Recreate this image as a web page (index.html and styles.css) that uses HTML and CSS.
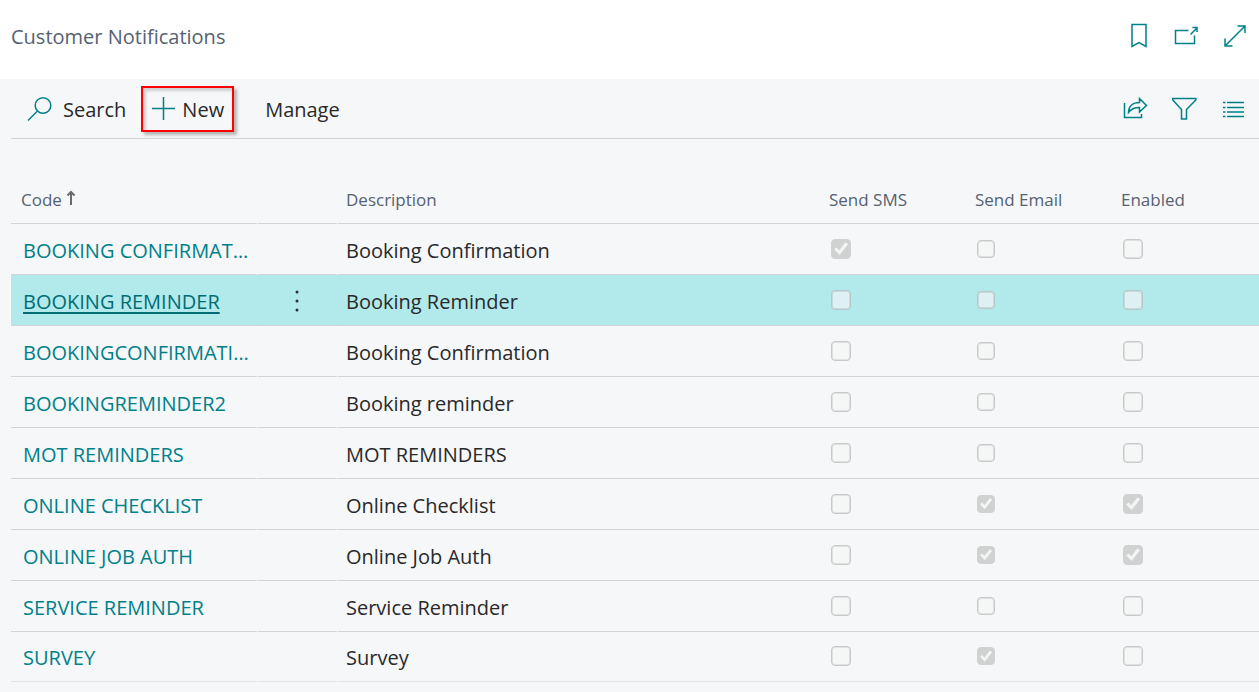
FILE: index.html
```html
<!DOCTYPE html>
<html lang="en">
<head>
<meta charset="utf-8">
<meta name="viewport" content="width=device-width, initial-scale=1">
<title>Customer Notifications</title>
<link rel="stylesheet" href="styles.css">
</head>
<body>
<header class="page-header">
  <h1 class="page-title">Customer Notifications</h1>
  <div class="header-actions">
    <button class="icon-button" type="button" aria-label="Bookmark">
      <svg width="24" height="26" viewBox="0 0 24 26"><path d="M5 2.500H19V24.500L12 20.500L5 24.500Z"/></svg>
    </button>
    <button class="icon-button" type="button" aria-label="Open in new window">
      <svg width="26" height="26" viewBox="0 0 26 26"><path d="M14.500 8.500H1.500V21.500H20.500V13.500M16.500 12.500L23 6M18.500 5.500H23V10"/></svg>
    </button>
    <button class="icon-button" type="button" aria-label="Expand">
      <svg width="24" height="26" viewBox="0 0 24 26"><path d="M2 24L22 4M14.500 4H22V11M2 16.500V24H9.500"/></svg>
    </button>
  </div>
</header>
<main class="content">
  <div class="toolbar">
    <button class="command search" type="button">
      <svg width="26" height="26" viewBox="0 0 26 26"><circle cx="17" cy="9.500" r="7.800"/><path d="M11.500 15L2 24.500"/></svg>
      <span>Search</span>
    </button>
    <button class="command new" type="button">
      <svg width="24" height="24" viewBox="0 0 24 24"><path d="M1 11.500H24M12.500 0V23"/></svg>
      <span>New</span>
    </button>
    <button class="command manage" type="button"><span>Manage</span></button>
    <div class="toolbar-icons">
      <button class="icon-button" type="button" aria-label="Share">
        <svg width="26" height="26" viewBox="0 0 26 26"><path d="M1.500 7V21.500H18.500V18M5.500 16.500C5.500 10 10 6.500 16.500 6.500V2.500L23.500 9.500L16.500 16V11.500C11.500 11.500 8 13 5.500 16.500Z"/></svg>
      </button>
      <button class="icon-button" type="button" aria-label="Filter">
        <svg width="26" height="26" viewBox="0 0 26 26"><path d="M.8 2.500H23.800V4L14.500 13.500V23H9.500V13.500L.8 4Z"/></svg>
      </button>
      <button class="icon-button" type="button" aria-label="Show as list">
        <svg width="24" height="26" viewBox="0 0 24 26"><path d="M2 6.500H4.500M6 6.500H23M2 11.500H4.500M6 11.500H23M2 16H4.500M6 16H23M2 20.500H4.500M6 20.500H23"/></svg>
      </button>
    </div>
  </div>
  <table class="list">
    <colgroup>
      <col class="col-code"><col class="col-menu"><col class="col-description"><col class="col-flag"><col class="col-flag"><col class="col-flag">
    </colgroup>
    <thead>
      <tr>
        <th class="code split" scope="col" aria-sort="ascending">Code <svg class="sort" width="10" height="16" viewBox="0 0 10 16"><path d="M5 15V2M1.500 5.500L5 2L8.500 5.500"/></svg></th>
        <td class="split"></td>
        <th scope="col">Description</th>
        <th scope="col">Send SMS</th>
        <th scope="col">Send Email</th>
        <th scope="col">Enabled</th>
      </tr>
    </thead>
    <tbody>
      <tr>
        <td class="code split"><a href="#">BOOKING CONFIRMAT…</a></td><td class="split"></td><td>Booking Confirmation</td>
        <td class="flag"><input type="checkbox" aria-label="Send SMS" checked disabled></td>
        <td class="flag email"><input type="checkbox" aria-label="Send Email" disabled></td>
        <td class="flag"><input type="checkbox" aria-label="Enabled" disabled></td>
      </tr>
      <tr class="selected">
        <td class="code split"><a href="#">BOOKING REMINDER</a></td>
        <td class="menu split"><button class="more" type="button" aria-label="More options"><svg width="4" height="24" viewBox="0 0 4 24"><circle cx="2" cy="3" r="1.500"/><circle cx="2" cy="12" r="1.500"/><circle cx="2" cy="21" r="1.500"/></svg></button></td>
        <td>Booking Reminder</td>
        <td class="flag"><input type="checkbox" aria-label="Send SMS" disabled></td>
        <td class="flag email"><input type="checkbox" aria-label="Send Email" disabled></td>
        <td class="flag"><input type="checkbox" aria-label="Enabled" disabled></td>
      </tr>
      <tr>
        <td class="code split"><a href="#">BOOKINGCONFIRMATI…</a></td><td class="split"></td><td>Booking Confirmation</td>
        <td class="flag"><input type="checkbox" aria-label="Send SMS" disabled></td>
        <td class="flag email"><input type="checkbox" aria-label="Send Email" disabled></td>
        <td class="flag"><input type="checkbox" aria-label="Enabled" disabled></td>
      </tr>
      <tr>
        <td class="code split"><a href="#">BOOKINGREMINDER2</a></td><td class="split"></td><td>Booking reminder</td>
        <td class="flag"><input type="checkbox" aria-label="Send SMS" disabled></td>
        <td class="flag email"><input type="checkbox" aria-label="Send Email" disabled></td>
        <td class="flag"><input type="checkbox" aria-label="Enabled" disabled></td>
      </tr>
      <tr>
        <td class="code split"><a href="#">MOT REMINDERS</a></td><td class="split"></td><td>MOT REMINDERS</td>
        <td class="flag"><input type="checkbox" aria-label="Send SMS" disabled></td>
        <td class="flag email"><input type="checkbox" aria-label="Send Email" disabled></td>
        <td class="flag"><input type="checkbox" aria-label="Enabled" disabled></td>
      </tr>
      <tr>
        <td class="code split"><a href="#">ONLINE CHECKLIST</a></td><td class="split"></td><td>Online Checklist</td>
        <td class="flag"><input type="checkbox" aria-label="Send SMS" disabled></td>
        <td class="flag email"><input type="checkbox" aria-label="Send Email" checked disabled></td>
        <td class="flag"><input type="checkbox" aria-label="Enabled" checked disabled></td>
      </tr>
      <tr>
        <td class="code split"><a href="#">ONLINE JOB AUTH</a></td><td class="split"></td><td>Online Job Auth</td>
        <td class="flag"><input type="checkbox" aria-label="Send SMS" disabled></td>
        <td class="flag email"><input type="checkbox" aria-label="Send Email" checked disabled></td>
        <td class="flag"><input type="checkbox" aria-label="Enabled" checked disabled></td>
      </tr>
      <tr>
        <td class="code split"><a href="#">SERVICE REMINDER</a></td><td class="split"></td><td>Service Reminder</td>
        <td class="flag"><input type="checkbox" aria-label="Send SMS" disabled></td>
        <td class="flag email"><input type="checkbox" aria-label="Send Email" disabled></td>
        <td class="flag"><input type="checkbox" aria-label="Enabled" disabled></td>
      </tr>
      <tr class="last">
        <td class="code split"><a href="#">SURVEY</a></td><td class="split"></td><td>Survey</td>
        <td class="flag"><input type="checkbox" aria-label="Send SMS" disabled></td>
        <td class="flag email"><input type="checkbox" aria-label="Send Email" checked disabled></td>
        <td class="flag"><input type="checkbox" aria-label="Enabled" disabled></td>
      </tr>
    </tbody>
  </table>
</main>
</body>
</html>
```
FILE: styles.css
```css
:root {
  --teal: #008089;
  --teal-dark: #006d75;
  --ink: #292929;
  --muted: #566172;
  --surface: #f6f7f9;
  --line: #d1d3d8;
}

* {
  box-sizing: border-box;
}

body {
  display: flex;
  flex-direction: column;
  min-height: 100vh;
  margin: 0;
  background: #fff;
  color: var(--ink);
  font-family: "Open Sans", "Noto Sans", sans-serif;
  font-size: 20px;
  line-height: 28px;
}

button {
  padding: 0;
  border: 0;
  background: none;
  color: inherit;
  font: inherit;
  cursor: pointer;
}

svg {
  display: block;
  fill: none;
  stroke: var(--teal);
  stroke-width: 1.5;
}

.page-header {
  display: flex;
  align-items: flex-start;
  justify-content: space-between;
  padding: 22px 12px 28px 11px;
}

.page-title {
  margin: 0;
  padding-top: 1px;
  color: var(--muted);
  font-size: 20px;
  font-weight: 400;
}

.header-actions,
.toolbar-icons {
  display: flex;
  align-items: center;
  gap: 23px;
}

.content {
  flex: 1;
  padding-left: 11px;
  background: var(--surface);
}

.toolbar {
  display: flex;
  align-items: center;
  height: 60px;
  padding: 1px 14px 0 15px;
  border-bottom: 1px solid var(--line);
}

.command {
  display: flex;
  align-items: center;
  gap: 11px;
}

.command span {
  padding-top: 2px;
}

.command.new {
  gap: 7px;
  height: 46px;
  margin: 0 31px 0 15px;
  padding: 0 8px;
  border: 2px solid #f00;
  box-shadow: 3px 3px 3px #b4b4b4, inset 3px 3px 3px #d0d0d0;
}

.toolbar-icons {
  margin-left: auto;
}

.list {
  width: 100%;
  table-layout: fixed;
  border-spacing: 0;
}

.col-code { width: 247px; }
.col-menu { width: 80px; }
.col-flag { width: 146px; }

.list th,
.list td {
  height: 51px;
  padding: 2px 0 0 8px;
  background: linear-gradient(var(--line), var(--line)) left bottom / 100% 1px no-repeat;
  text-align: left;
  white-space: nowrap;
}

.list .split {
  background-size: calc(100% - 1px) 1px;
}

.list th {
  height: 85px;
  padding-top: 36px;
  color: var(--muted);
  font-size: 17px;
  font-weight: 400;
}

.list th.code {
  padding-left: 10px;
}

.list td.code {
  padding-left: 12px;
}

.list a {
  color: var(--teal);
  text-decoration: none;
}

.sort {
  display: inline-block;
  stroke: #6b6b6b;
  stroke-width: 2;
}

.list .selected {
  background: #b2e9eb;
}

.list .selected a {
  color: var(--teal-dark);
  text-decoration: underline;
  text-decoration-thickness: 2px;
  text-underline-offset: 3px;
}

.more {
  display: block;
  margin: auto;
}

.more svg {
  fill: #303030;
  stroke: none;
}

.list .menu {
  padding: 0 2px 0 0;
}

.list .flag {
  padding: 0 0 2px 10px;
}

.flag input {
  display: block;
  width: 20px;
  height: 20px;
  margin: 0;
  border: 1px solid #c8caca;
  border-radius: 4px;
  appearance: none;
  background: #f5f7f6;
  box-shadow: inset 0 0 0 1px #e0e2e2;
}

.email input {
  width: 18px;
  height: 18px;
}

.selected input {
  border-color: #b5c9cb;
  background: #def0f3;
  box-shadow: inset 0 0 0 1px #c8dadc;
}

.flag input:checked {
  border-color: #d0d2d1;
  background: #d0d2d1;
  box-shadow: none;
}

.flag input:checked::before {
  content: "";
  display: block;
  width: 16px;
  height: 16px;
  margin: 1px;
  background: #f3f4f4;
  clip-path: polygon(8% 56%, 22% 43%, 39% 61%, 78% 11%, 94% 24%, 41% 91%);
}

.flag.email input:checked::before {
  width: 14px;
  height: 14px;
}

.list .last td {
  height: 50px;
  background-image: linear-gradient(#e2e4e7, #e2e4e7);
}
```
